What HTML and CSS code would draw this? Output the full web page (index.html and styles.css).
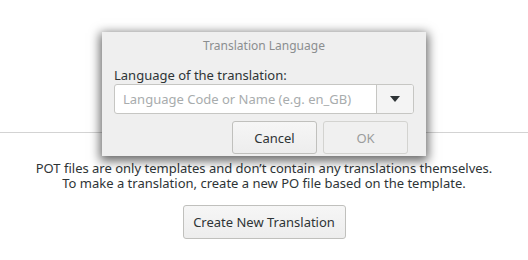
FILE: index.html
```html
<!DOCTYPE html>
<html>
<head>
<meta charset="utf-8">
<link rel="stylesheet" href="styles.css">
</head>
<body>
<div class="page">
  <div class="top"></div>
  <div class="sep"></div>
  <div class="info">
    <div class="msg">
      <div class="line">POT files are only templates and don’t contain any translations themselves.</div>
      <div class="line">To make a translation, create a new PO file based on the template.</div>
    </div>
    <button class="btn create">Create New Translation</button>
  </div>
</div>
<div class="dialog">
  <div class="title">Translation Language</div>
  <div class="content">
    <label class="label">Language of the translation:</label>
    <div class="combo">
      <div class="entry">Language Code or Name (e.g. en_GB)</div>
      <div class="drop"><svg width="10" height="6" viewBox="0 0 10 6"><path d="M0 0h10L5 6z" fill="#2e3436"/></svg></div>
    </div>
    <div class="actions">
      <button class="btn dbtn">Cancel</button>
      <button class="btn dbtn disabled">OK</button>
    </div>
  </div>
</div>
</body>
</html>
```
FILE: styles.css
```css
html, body {
  margin: 0;
  padding: 0;
  background: #ffffff;
  font-family: "Noto Sans", sans-serif;
  font-size: 13px;
  color: #2e3436;
  width: 528px;
  height: 260px;
  overflow: hidden;
}
.page {
  display: flex;
  flex-direction: column;
}
.top {
  height: 132px;
}
.sep {
  height: 1px;
  background: #d3d3d3;
}
.info {
  display: flex;
  flex-direction: column;
  align-items: center;
}
.msg {
  margin-top: 28px;
  display: flex;
  flex-direction: column;
  gap: 0;
  text-align: center;
}
.line {
  height: 14.5px;
  line-height: 14px;
}
.btn {
  font-family: "Noto Sans", sans-serif;
  font-size: 13px;
  color: #2e3436;
  background: linear-gradient(#f6f6f6, #ededed);
  border: 1px solid #c0c0bd;
  border-radius: 3px;
  box-sizing: border-box;
  padding: 0;
}
.create {
  margin-top: 15px;
  width: 163px;
  height: 34px;
}
.dialog {
  position: absolute;
  left: 102px;
  top: 32px;
  width: 324px;
  height: 124px;
  background: #efefef;
  box-shadow: 0 3px 10px 2px rgba(0,0,0,0.6);
  display: flex;
  flex-direction: column;
}
.title {
  text-align: center;
  font-size: 12px;
  color: #8b8e8f;
  margin-top: 6px;
  height: 15px;
  line-height: 15px;
}
.content {
  padding: 0 12px;
  display: flex;
  flex-direction: column;
}
.label {
  margin-top: 14px;
  line-height: 16px;
  height: 15px;
}
.combo {
  margin-top: 2px;
  display: flex;
  height: 30px;
  width: 300px;
  box-sizing: border-box;
  border: 1px solid #c6c6c3;
  border-radius: 3px;
  background: #fff;
  overflow: hidden;
}
.entry {
  flex: 1;
  padding-left: 8px;
  line-height: 28px;
  color: #a8acad;
  border-right: 1px solid #c6c6c3;
}
.drop {
  width: 36px;
  background: #f4f4f4;
  display: flex;
  align-items: center;
  justify-content: center;
}
.actions {
  display: flex;
  justify-content: flex-end;
  gap: 6px;
  margin-top: 7px;
  padding-right: 6px;
}
.dbtn {
  width: 85px;
  height: 33px;
}
.disabled {
  color: #9a9c9c;
  background: #f0f0f0;
  border-color: #d3d3d0;
}
```
